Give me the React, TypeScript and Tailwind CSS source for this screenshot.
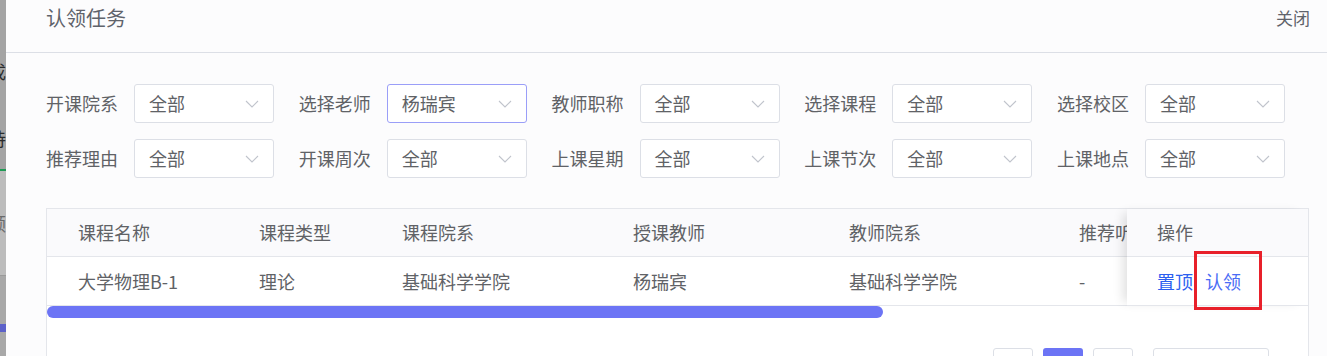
import React from "react";

const FONT = { fontFamily: '"Noto Sans CJK SC", "Noto Sans", sans-serif' };

function Chevron() {
  return (
    <svg width="14" height="8" viewBox="0 0 14 8" fill="none">
      <polyline points="1,1 7,7 13,1" stroke="#c0c4cc" strokeWidth="1.1" />
    </svg>
  );
}

function Select({ value, active }: { value: string; active?: boolean }) {
  return (
    <div
      className={`flex h-[39px] w-[140px] items-center justify-between rounded-[3px] border bg-white pl-[14px] pr-[14px] ${
        active ? "border-[#9a9ef8]" : "border-[#dcdfe6]"
      }`}
    >
      <span className="text-[18px] text-[#606266]">{value}</span>
      <Chevron />
    </div>
  );
}

function Filter({ label, value, active }: { label: string; value: string; active?: boolean }) {
  return (
    <div className="flex items-center">
      <div className="w-[88px] text-[18px] text-[#606266]">{label}</div>
      <Select value={value} active={active} />
    </div>
  );
}

const cols = [
  { w: "w-[181px]", h: "课程名称", v: "大学物理B-1" },
  { w: "w-[143px]", h: "课程类型", v: "理论" },
  { w: "w-[231px]", h: "课程院系", v: "基础科学学院" },
  { w: "w-[216px]", h: "授课教师", v: "杨瑞宾" },
  { w: "w-[230px]", h: "教师院系", v: "基础科学学院" },
  { w: "w-[120px]", h: "推荐听课", v: "-" },
];

export default function App() {
  return (
    <div className="flex h-[356px] w-[1327px] overflow-hidden bg-[#fcfcfd]" style={FONT}>
      {/* underlying page strip */}
      <div className="flex w-[6px] shrink-0 flex-col overflow-hidden">
        <div className="relative h-[169px] bg-[#a4a4a4]">
          <span className="absolute left-[-12px] top-[62px] text-[18px] leading-none text-[#2b2b2b]">成</span>
          <span className="absolute left-[-12px] top-[129px] text-[18px] leading-none text-[#2b2b2b]">持</span>
        </div>
        <div className="h-[2px] bg-[#1f9a55]" />
        <div className="relative h-[104px] bg-[#bcbcbc]">
          <span className="absolute left-[-12px] top-[43px] text-[18px] leading-none text-[#6a6a6a]">领</span>
        </div>
        <div className="h-[1px] bg-[#9a9a9a]" />
        <div className="h-[48px] bg-[#a8a8a8]" />
        <div className="h-[8px] bg-[#5c61c9]" />
        <div className="flex-1 bg-[#a8a8a8]" />
      </div>

      {/* dialog */}
      <div className="flex flex-1 flex-col">
        <div className="flex h-[53px] shrink-0 items-center justify-between border-b border-[#dcdfe6] pb-[17px] pl-[40px] pr-[17px]">
          <span className="text-[20px] leading-[28px] text-[#5f636b]">认领任务</span>
          <span className="text-[17px] leading-[28px] text-[#5f636b]">关闭</span>
        </div>

        <div className="flex flex-col gap-[16px] pl-[40px] pt-[31px]">
          <div className="flex gap-[24.75px]">
            <Filter label="开课院系" value="全部" />
            <Filter label="选择老师" value="杨瑞宾" active />
            <Filter label="教师职称" value="全部" />
            <Filter label="选择课程" value="全部" />
            <Filter label="选择校区" value="全部" />
          </div>
          <div className="flex gap-[24.75px]">
            <Filter label="推荐理由" value="全部" />
            <Filter label="开课周次" value="全部" />
            <Filter label="上课星期" value="全部" />
            <Filter label="上课节次" value="全部" />
            <Filter label="上课地点" value="全部" />
          </div>
        </div>

        <div className="ml-[40px] mt-[30px] w-[1263px] flex-1 border border-[#e4e6eb] bg-white">
          <div className="relative">
            <div className="w-[1261px] overflow-hidden">
              <div className="flex h-[48px] items-center border-b border-[#e4e6eb] bg-[#fafafc]">
                {cols.map((c) => (
                  <div key={c.h} className={`${c.w} shrink-0 whitespace-nowrap pl-[31px] text-[18px] text-[#606266]`}>
                    {c.h}
                  </div>
                ))}
              </div>
              <div className="flex h-[49px] items-center border-b border-[#e4e6eb] bg-white">
                {cols.map((c) => (
                  <div key={c.h} className={`${c.w} shrink-0 whitespace-nowrap pl-[31px] text-[18px] text-[#606266]`}>
                    {c.v}
                  </div>
                ))}
              </div>
            </div>

            {/* fixed operation column */}
            <div className="absolute right-0 top-0 w-[181px] shadow-[-8px_0_10px_-4px_rgba(0,0,0,0.12)]">
              <div className="flex h-[48px] items-center border-b border-[#e4e6eb] bg-[#fafafc] pl-[30px] text-[18px] text-[#606266]">
                操作
              </div>
              <div className="flex h-[49px] items-center gap-[12px] border-b border-[#e4e6eb] bg-white pl-[30px] text-[18px]">
                <span className="text-[#2c5ff0]">置顶</span>
                <span className="text-[#4a6cf5]">认领</span>
              </div>
            </div>

            {/* annotation */}
            <div className="absolute left-[1147px] top-[42px] h-[59px] w-[68px] border-[3px] border-[#e8202a]" />
          </div>

          <div className="h-[12px] w-[836px] rounded-full bg-[#6c74f5]" />

          <div className="mt-[30px] flex justify-end pr-[39px]">
            <div className="h-[30px] w-[40px] rounded-[3px] border border-[#dcdfe6] bg-white" />
            <div className="ml-[10px] h-[30px] w-[40px] rounded-[3px] bg-[#6c74f5]" />
            <div className="ml-[10px] h-[30px] w-[40px] rounded-[3px] border border-[#dcdfe6] bg-white" />
            <div className="ml-[20px] h-[30px] w-[116px] rounded-[3px] border border-[#dcdfe6] bg-white" />
          </div>
        </div>
      </div>
    </div>
  );
}
